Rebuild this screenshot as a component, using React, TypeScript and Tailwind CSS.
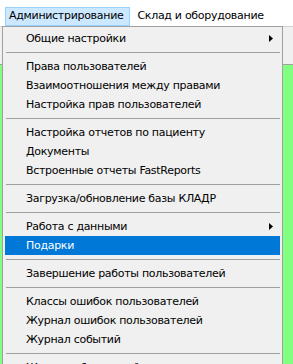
const groups: { label: string; submenu?: boolean; active?: boolean }[][] = [
  [{ label: "Общие настройки", submenu: true }],
  [
    { label: "Права пользователей" },
    { label: "Взаимоотношения между правами" },
    { label: "Настройка прав пользователей" },
  ],
  [
    { label: "Настройка отчетов по пациенту" },
    { label: "Документы" },
    { label: "Встроенные отчеты FastReports" },
  ],
  [{ label: "Загрузка/обновление базы КЛАДР" }],
  [{ label: "Работа с данными", submenu: true }, { label: "Подарки", active: true }],
  [{ label: "Завершение работы пользователей" }],
  [
    { label: "Классы ошибок пользователей" },
    { label: "Журнал ошибок пользователей" },
    { label: "Журнал событий" },
  ],
  [{ label: "Журнал обновлений" }],
];

const MenuItem = ({ label, submenu, active }: { label: string; submenu?: boolean; active?: boolean }) => (
  <div
    className={`h-[19px] flex items-center justify-between pl-[21px] pr-[7px] ${
      active ? "bg-[#0078d7] text-white" : "text-black"
    }`}
  >
    <span className="leading-none whitespace-nowrap">{label}</span>
    {submenu && (
      <svg width="4" height="7" viewBox="0 0 4 7">
        <polygon points="0,0 4,3.5 0,7" fill="#000" />
      </svg>
    )}
  </div>
);

const App = () => {
  return (
    <div
      className="relative w-[293px] h-[364px] overflow-hidden bg-[#f0f0f0] text-[11px] tracking-[-0.3px]"
      style={{ fontFamily: '"DejaVu Sans", sans-serif' }}
    >
      {/* menu bar */}
      <div className="h-[27px] bg-white flex items-start pt-[7px] pl-[5px] border-b border-[#d0d0d0]">
        <div className="h-[19px] flex items-center pl-[3px] pr-[6px] bg-[#cce8ff] border border-[#99d1ff]">
          Администрирование
        </div>
        <div className="h-[19px] flex items-center pl-[7px]">Склад и оборудование</div>
      </div>
      {/* toolbar strip */}
      <div className="h-[38px] border-b border-[#a0a0a0]" />
      {/* window content */}
      <div className="h-full bg-[#80ff80]" />

      {/* dropdown */}
      <div className="absolute left-[2px] top-[26px] w-[281px] border border-[#a0a0a0] bg-[#f0f0f0] p-[2px]">
        {groups.map((group, gi) => (
          <div key={gi}>
            {gi > 0 && (
              <div className="h-[9px] pt-[4px] pl-[1px]">
                <div className="h-px bg-[#a0a0a0]" />
              </div>
            )}
            {group.map((item) => (
              <MenuItem key={item.label} {...item} />
            ))}
          </div>
        ))}
      </div>
    </div>
  );
};

export default App;
